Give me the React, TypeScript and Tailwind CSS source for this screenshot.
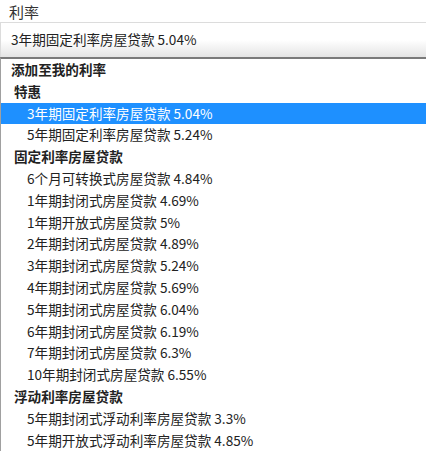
import React from "react";

type Row = { text: string; kind: "top" | "group" | "item"; selected?: boolean };

const rows: Row[] = [
  { text: "添加至我的利率", kind: "top" },
  { text: "特惠", kind: "group" },
  { text: "3年期固定利率房屋贷款 5.04%", kind: "item", selected: true },
  { text: "5年期固定利率房屋贷款 5.24%", kind: "item" },
  { text: "固定利率房屋贷款", kind: "group" },
  { text: "6个月可转换式房屋贷款 4.84%", kind: "item" },
  { text: "1年期封闭式房屋贷款 4.69%", kind: "item" },
  { text: "1年期开放式房屋贷款 5%", kind: "item" },
  { text: "2年期封闭式房屋贷款 4.89%", kind: "item" },
  { text: "3年期封闭式房屋贷款 5.24%", kind: "item" },
  { text: "4年期封闭式房屋贷款 5.69%", kind: "item" },
  { text: "5年期封闭式房屋贷款 6.04%", kind: "item" },
  { text: "6年期封闭式房屋贷款 6.19%", kind: "item" },
  { text: "7年期封闭式房屋贷款 6.3%", kind: "item" },
  { text: "10年期封闭式房屋贷款 6.55%", kind: "item" },
  { text: "浮动利率房屋贷款", kind: "group" },
  { text: "5年期封闭式浮动利率房屋贷款 3.3%", kind: "item" },
  { text: "5年期开放式浮动利率房屋贷款 4.85%", kind: "item" },
];

export default function App() {
  return (
    <div
      className="w-[426px] h-[453px] overflow-hidden bg-white text-[#222]"
      style={{ fontFamily: '"Noto Sans CJK SC", "Noto Sans", sans-serif' }}
    >
      <div className="h-[22px] pl-[9px] flex items-center text-[15px] leading-none text-[#333]">
        利率
      </div>
      <div className="h-[35px] pl-[10px] flex items-center text-[13.6px] leading-none border-l border-t border-[#dcdcdc] bg-gradient-to-b from-white from-50% to-[#e4e4e4]">
        3年期固定利率房屋贷款 5.04%
      </div>
      <div className="border-t-2 border-l border-t-[#7a7a7a] border-l-[#a0a0a0]">
        {rows.map((r, i) => (
          <div
            key={i}
            className={
              "h-[21.8px] flex items-center text-[13.6px] leading-none whitespace-nowrap " +
              (r.kind === "top"
                ? "pl-[10px] font-bold"
                : r.kind === "group"
                ? "pl-[13px] font-bold"
                : "pl-[26px]") +
              (r.selected ? " bg-[#1e90ff] text-white" : "")
            }
          >
            {r.text}
          </div>
        ))}
      </div>
    </div>
  );
}
